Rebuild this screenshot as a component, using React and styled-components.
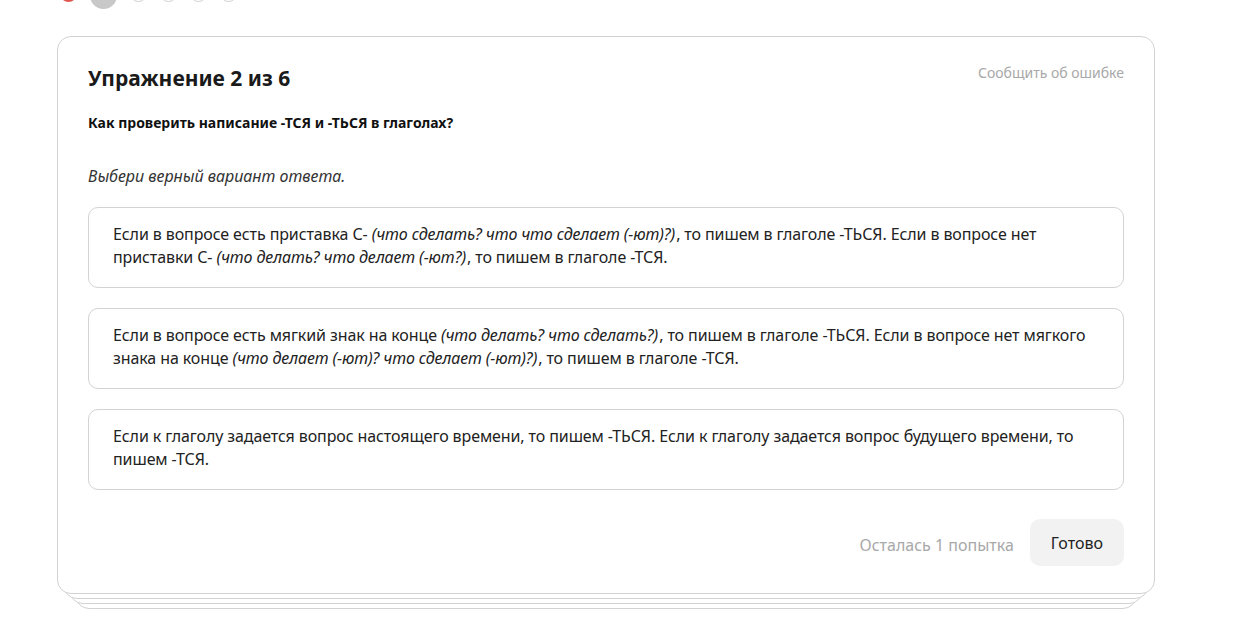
import React from 'react'
import styled, { createGlobalStyle } from 'styled-components';

const GlobalStyle = createGlobalStyle`
    body{
        margin: 0;
        background: #fff;
        font-family: 'Noto Sans', 'Open Sans', sans-serif;
        color: #222;
    }
`;

const options = [
    [
        'Если в вопросе есть приставка С- ',
        { i: '(что сделать? что что сделает (-ют)?)' },
        ', то пишем в глаголе -ТЬСЯ. Если в вопросе нет приставки С- ',
        { i: '(что делать? что делает (-ют?)' },
        ', то пишем в глаголе -ТСЯ.',
    ],
    [
        'Если в вопросе есть мягкий знак на конце ',
        { i: '(что делать? что сделать?)' },
        ', то пишем в глаголе -ТЬСЯ. Если в вопросе нет мягкого знака на конце ',
        { i: '(что делает (-ют)? что сделает (-ют)?)' },
        ', то пишем в глаголе -ТСЯ.',
    ],
    [
        'Если к глаголу задается вопрос настоящего времени, то пишем -ТЬСЯ. Если к глаголу задается вопрос будущего времени, то пишем -ТСЯ.',
    ],
];

const steps = ['done', 'current', 'todo', 'todo', 'todo', 'todo'];

function App() {
    return (
        <Page>
            <GlobalStyle />
            <Steps>
                {steps.map((s, idx) => (
                    <Step key={idx} $state={s} />
                ))}
            </Steps>
            <CardStack>
                <Layer $n={3} />
                <Layer $n={2} />
                <Layer $n={1} />
                <Card>
                    <Header>
                        <Title>Упражнение 2 из 6</Title>
                        <Report>Сообщить об ошибке</Report>
                    </Header>
                    <Question>Как проверить написание -ТСЯ и -ТЬСЯ в глаголах?</Question>
                    <Hint>Выбери верный вариант ответа.</Hint>
                    <Options>
                        {options.map((parts, idx) => (
                            <Option key={idx}>
                                {parts.map((p, j) =>
                                    typeof p === 'string' ? p : <em key={j}>{p.i}</em>
                                )}
                            </Option>
                        ))}
                    </Options>
                    <Footer>
                        <Attempts>Осталась 1 попытка</Attempts>
                        <DoneButton>Готово</DoneButton>
                    </Footer>
                </Card>
            </CardStack>
        </Page>
    )
}

const Page = styled.div`
    padding: 0 0 40px 57px;
    width: 1098px;
`;

const Steps = styled.div`
    display: flex;
    align-items: center;
    gap: 13px;
    margin: -19px 0 0 3px;
    height: 28px;
`;

const Step = styled.span`
    display: block;
    border-radius: 50%;
    box-sizing: border-box;
    width: ${p => (p.$state === 'current' ? '27px' : '17px')};
    height: ${p => (p.$state === 'current' ? '27px' : '17px')};
    background: ${p => (p.$state === 'done' ? '#e0564f' : p.$state === 'current' ? '#c8c8c8' : '#fff')};
    border: ${p => (p.$state === 'todo' ? '1px solid #cfcfcf' : 'none')};
    margin-top: ${p => (p.$state === 'current' ? '0' : '-4px')};
`;

const CardStack = styled.div`
    position: relative;
    margin-top: 27px;
`;

const Layer = styled.div`
    position: absolute;
    left: ${p => p.$n * 6}px;
    right: ${p => p.$n * 6}px;
    top: 20px;
    bottom: ${p => -p.$n * 5}px;
    border: 1px solid #d2d2d2;
    border-radius: 14px;
    background: #fff;
`;

const Card = styled.div`
    position: relative;
    background: #fff;
    border: 1px solid #d2d2d2;
    border-radius: 14px;
    padding: 26px 30px 27px;
`;

const Header = styled.div`
    display: flex;
    justify-content: space-between;
    align-items: flex-start;
`;

const Title = styled.h2`
    margin: 0;
    font-size: 21px;
    font-weight: 700;
    line-height: 30px;
    color: #1a1a1a;
`;

const Report = styled.a`
    font-size: 14px;
    color: #a8a8a8;
    line-height: 20px;
    margin-top: 0;
`;

const Question = styled.p`
    margin: 20px 0 0;
    font-size: 14px;
    font-weight: 700;
    line-height: 20px;
    color: #111;
`;

const Hint = styled.p`
    margin: 32px 0 0;
    font-size: 16px;
    font-style: italic;
    line-height: 22px;
    color: #333;
`;

const Options = styled.div`
    display: flex;
    flex-direction: column;
    gap: 20px;
    margin-top: 20px;
`;

const Option = styled.div`
    border: 1px solid #d3d3d3;
    border-radius: 10px;
    padding: 15px 24px 18px;
    font-size: 16px;
    line-height: 23px;
    letter-spacing: -0.1px;
    color: #222;
    min-height: 46px;

    em{
        font-style: italic;
        padding-right: 1px;
    }
`;

const Footer = styled.div`
    display: flex;
    justify-content: flex-end;
    align-items: center;
    gap: 16px;
    margin-top: 29px;
`;

const Attempts = styled.span`
    font-size: 16px;
    color: #a8a8a8;
    padding-top: 4px;
`;

const DoneButton = styled.button`
    border: none;
    background: #f2f2f2;
    border-radius: 10px;
    height: 47px;
    padding: 0 21px;
    font-family: inherit;
    font-size: 16px;
    color: #222;
`;

export default App;
